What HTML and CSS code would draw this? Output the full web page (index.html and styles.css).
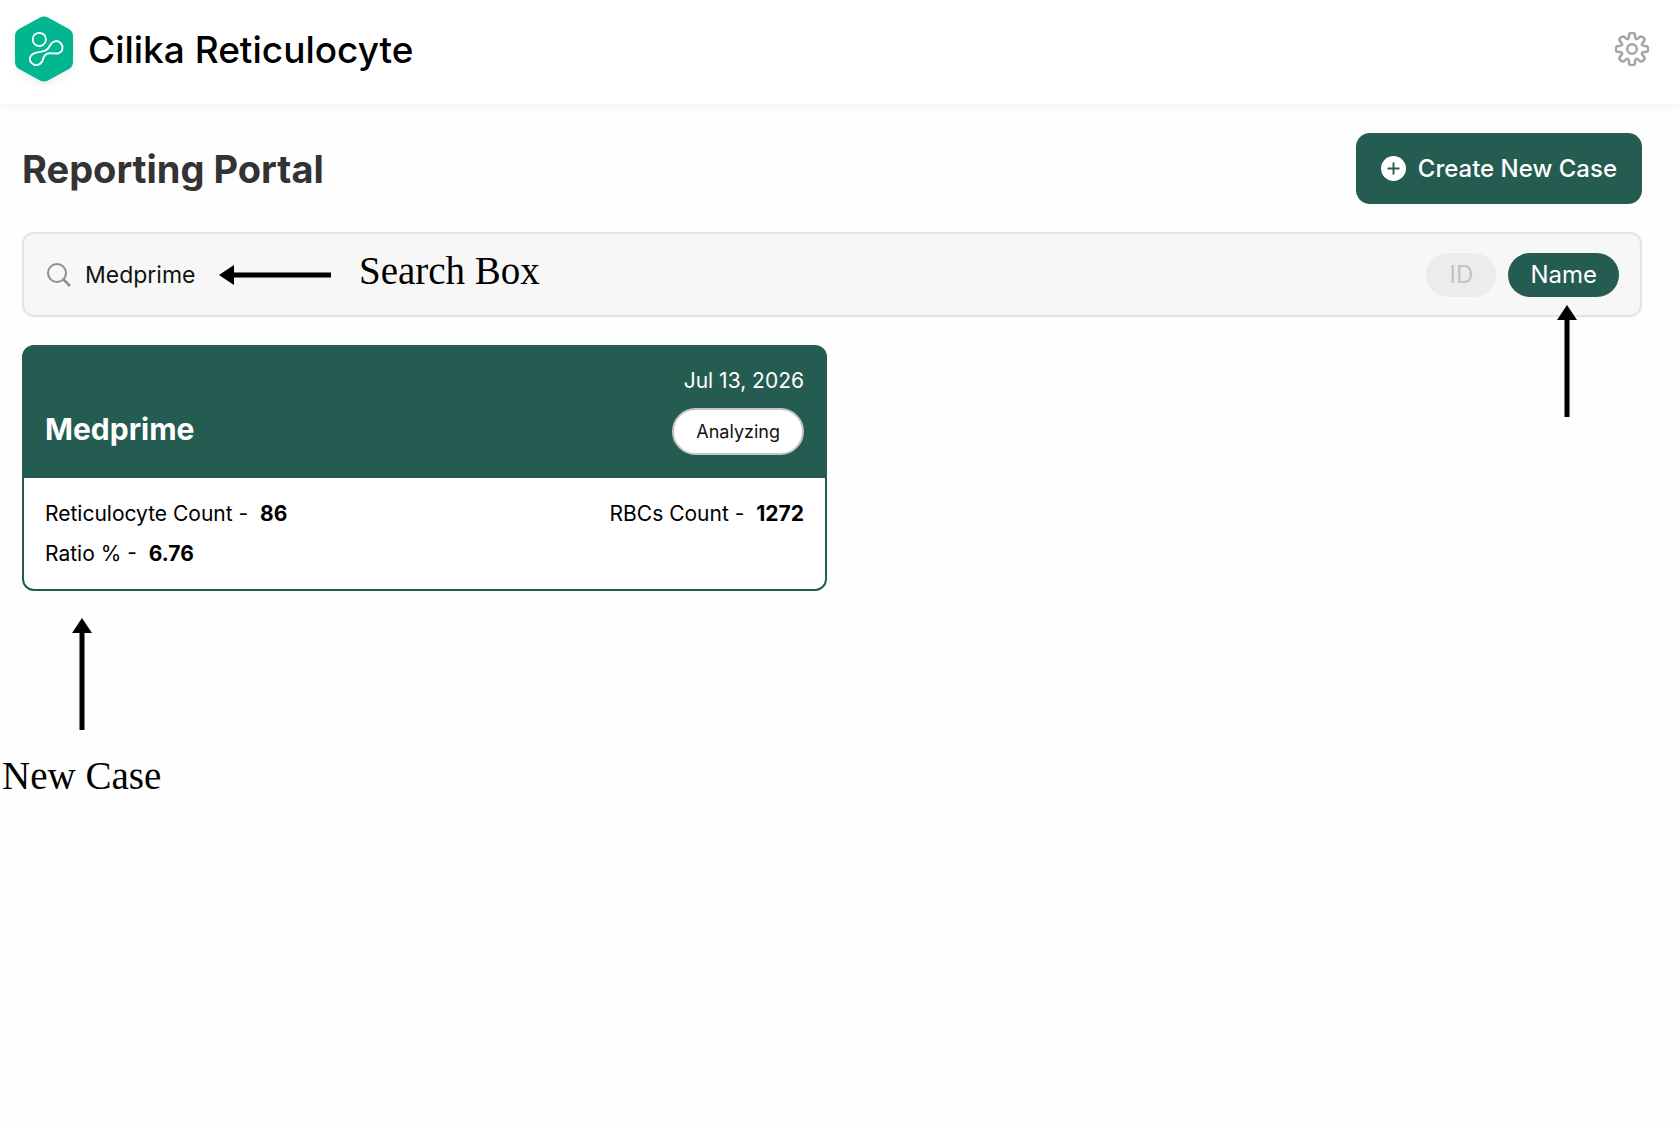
FILE: index.html
```html
<!DOCTYPE html>
<html lang="en">
<head>
  <meta charset="UTF-8">
  <meta name="viewport" content="width=device-width, initial-scale=1.0">
  <title>Cilika Reticulocyte</title>
  <link rel="stylesheet" href="styles.css">
</head>
<body>
  <header class="topbar">
    <div class="brand">
      <svg class="logo" viewBox="0 0 58 66" aria-hidden="true">
        <path d="M25 1.5 Q29 -.7 33 1.5 L54 13 Q58 15.5 58 20 V46 Q58 50.500 54 53 L33 64.500 Q29 66.700 25 64.500 L4 53 Q0 50.500 0 46 V20 Q0 15.500 4 13 Z" fill="#02b690"/>
        <g fill="none" stroke="#fff">
          <circle cx="24.300" cy="23.400" r="6.600" stroke-width="1.800"/>
          <path d="M20.500 36.800 C28 35 31.500 36.500 35 29.500 C37 25 42 23.800 45 26.500 C49 30 48 36 43.500 37.300 C37.500 38.500 31.500 34.500 28.500 41.500 C27.500 48 22.500 50.500 18.500 48.300 C13 45.500 14 38.500 20.500 36.800 Z" stroke-width="1.900"/>
        </g>
      </svg>
      <span class="brand-name">Cilika Reticulocyte</span>
    </div>
    <button class="settings" aria-label="Settings">
      <svg viewBox="0 0 34 34" aria-hidden="true"></svg>
    </button>
  </header>

  <main class="content">
    <div class="page-head">
      <h1>Reporting Portal</h1>
      <button class="create">
        <svg viewBox="0 0 24 24" aria-hidden="true">
          <circle cx="12" cy="12" r="12" fill="#fff"/>
          <path d="M12 7 V17 M7 12 H17" stroke="#255c51" stroke-width="1.800" stroke-linecap="round"/>
        </svg>
        Create New Case
      </button>
    </div>

    <div class="search">
      <svg class="search-icon" viewBox="0 0 24 24" fill="none" stroke="#8e8e8e" stroke-width="2" aria-hidden="true">
        <circle cx="10" cy="10" r="9"/>
        <path d="M16.500 16.500 L23 23" stroke-width="2.500"/>
      </svg>
      <input class="search-input" type="text" value="Medprime" aria-label="Search cases">
      <button class="filter">ID</button>
      <button class="filter active">Name</button>

      <div class="note note-search">
        <svg class="arrow-left" viewBox="0 0 112 20" aria-hidden="true">
          <path d="M0 10 L15 0 V7.500 H112 V12.500 H15 V20 Z"/>
        </svg>
        <span>Search Box</span>
      </div>
      <div class="note note-name">
        <svg class="arrow-up" viewBox="0 0 20 112" aria-hidden="true">
          <path d="M10 0 L20 15 H12.500 V112 H7.500 V15 H0 Z"/>
        </svg>
      </div>
    </div>

    <div class="cases">
      <article class="case">
        <div class="case-head">
          <h2>Medprime</h2>
          <div class="case-meta">
            <span class="date">Jul 13, 2026</span>
            <span class="status">Analyzing</span>
          </div>
        </div>
        <div class="case-body">
          <p>Reticulocyte Count - <strong>86</strong></p>
          <p>RBCs Count - <strong>1272</strong></p>
          <p>Ratio % - <strong>6.76</strong></p>
        </div>
      </article>
    </div>
  </main>

  <div class="case-note">
    <svg class="arrow-up" viewBox="0 0 20 112" aria-hidden="true">
      <path d="M10 0 L20 15 H12.500 V112 H7.500 V15 H0 Z"/>
    </svg>
    <span>New Case</span>
  </div>

  <script>
    // Gear outline with eight rounded teeth
    const gear = document.querySelector('.settings svg');
    const points = [];
    for (let i = 0; i < 8; i++) {
      const mid = i * 45 - 90;
      [[-16, 10.8], [-11, 16.5], [11, 16.5], [16, 10.8]].forEach(([offset, radius]) => {
        const angle = (mid + offset) * Math.PI / 180;
        points.push([17 + radius * Math.cos(angle), 17 + radius * Math.sin(angle)]);
      });
    }
    const halfway = (a, b) => [(a[0] + b[0]) / 2, (a[1] + b[1]) / 2];
    let d = 'M' + halfway(points[points.length - 1], points[0]);
    points.forEach((point, i) => {
      const next = halfway(point, points[(i + 1) % points.length]);
      d += ' Q' + point + ' ' + next;
    });
    gear.innerHTML = `<path d="${d}Z"/><circle cx="17" cy="17" r="4.8"/>`;
  </script>
</body>
</html>
```

FILE: styles.css
```css
* {
  box-sizing: border-box;
}

body {
  margin: 0;
  background: #fefefe;
  color: #000;
  font-family: Inter, "Liberation Sans", sans-serif;
}

button,
input {
  font-family: inherit;
  border: none;
}

button {
  cursor: pointer;
}

h1,
h2,
p {
  margin: 0;
}

/* Header */
.topbar {
  display: flex;
  align-items: center;
  justify-content: space-between;
  padding: 16px 31px 22px 15px;
  background: #fff;
  box-shadow: 0 2px 12px rgba(0, 0, 0, 0.06);
}

.brand {
  display: flex;
  align-items: center;
  gap: 15px;
}

.logo {
  width: 58px;
  height: 66px;
  filter: drop-shadow(0 4px 4px rgba(0, 0, 0, 0.06));
}

.brand-name {
  font-size: 37px;
  font-weight: 500;
}

.settings {
  padding: 0;
  background: none;
}

.settings svg {
  display: block;
  width: 34px;
  height: 34px;
  fill: none;
  stroke: #a3a3a8;
  stroke-width: 2.5;
}

/* Page */
.content {
  padding: 29px 38px 27px 22px;
}

.page-head {
  display: flex;
  align-items: center;
  justify-content: space-between;
  margin-bottom: 28px;
}

h1 {
  color: #333;
  font-size: 38px;
  font-weight: 700;
}

.create {
  display: flex;
  align-items: center;
  gap: 12px;
  height: 71px;
  padding: 0 25px;
  border-radius: 14px;
  background: #255c51;
  color: #fff;
  font-size: 24px;
  font-weight: 500;
}

.create svg {
  width: 25px;
  height: 25px;
}

/* Search */
.search {
  position: relative;
  display: flex;
  align-items: center;
  gap: 12px;
  height: 85px;
  margin-bottom: 28px;
  padding: 0 21px 0 23px;
  border: 2px solid #e3e3e3;
  border-radius: 12px;
  background: #f7f7f7;
}

.search-icon {
  width: 24px;
  height: 24px;
}

.search-input {
  flex: 1;
  min-width: 0;
  background: none;
  color: #111;
  font-size: 23px;
}

.filter {
  min-width: 70px;
  height: 44px;
  padding: 0 22px;
  border-radius: 22px;
  background: #ececec;
  color: #c3c3c3;
  font-size: 24px;
}

.filter.active {
  background: #255c51;
  color: #fff;
}

/* Cases */
.cases {
  display: grid;
  grid-template-columns: 1fr 1fr;
  gap: 10px;
}

.case {
  border: 2px solid #255c51;
  border-radius: 12px;
  background: #fff;
}

.case-head {
  display: flex;
  align-items: flex-end;
  justify-content: space-between;
  padding: 20px 21px 23px;
  border-radius: 8px 8px 0 0;
  background: #255c51;
  color: #fff;
}

h2 {
  font-size: 30px;
  font-weight: 700;
  line-height: 52px;
}

.case-meta {
  display: flex;
  flex-direction: column;
  align-items: flex-end;
  gap: 13px;
}

.date {
  font-size: 21px;
  line-height: 28px;
}

.status {
  padding: 0 22px;
  border: 2px solid #c4c4c8;
  border-radius: 24px;
  background: #fff;
  color: #111;
  font-size: 18px;
  line-height: 43px;
}

.case-body {
  display: grid;
  grid-template-columns: 1fr auto;
  padding: 16px 21px 15px;
  font-size: 21px;
  line-height: 40px;
}

.case-body strong {
  margin-left: 6px;
}

/* Callouts */
.note,
.case-note {
  font-family: "Liberation Serif", serif;
  font-size: 39px;
  line-height: 44px;
}

.note {
  position: absolute;
}

.arrow-left {
  width: 112px;
  height: 20px;
  margin-top: 8px;
}

.arrow-up {
  display: block;
  width: 20px;
  height: 112px;
}

.note-search {
  top: 15px;
  left: 195px;
  display: flex;
  align-items: center;
  gap: 28px;
}

.note-name {
  top: 71px;
  right: 63px;
}

.case-note {
  padding: 0 2px;
}

.case-note .arrow-up {
  margin: 0 0 24px 70px;
}
```
